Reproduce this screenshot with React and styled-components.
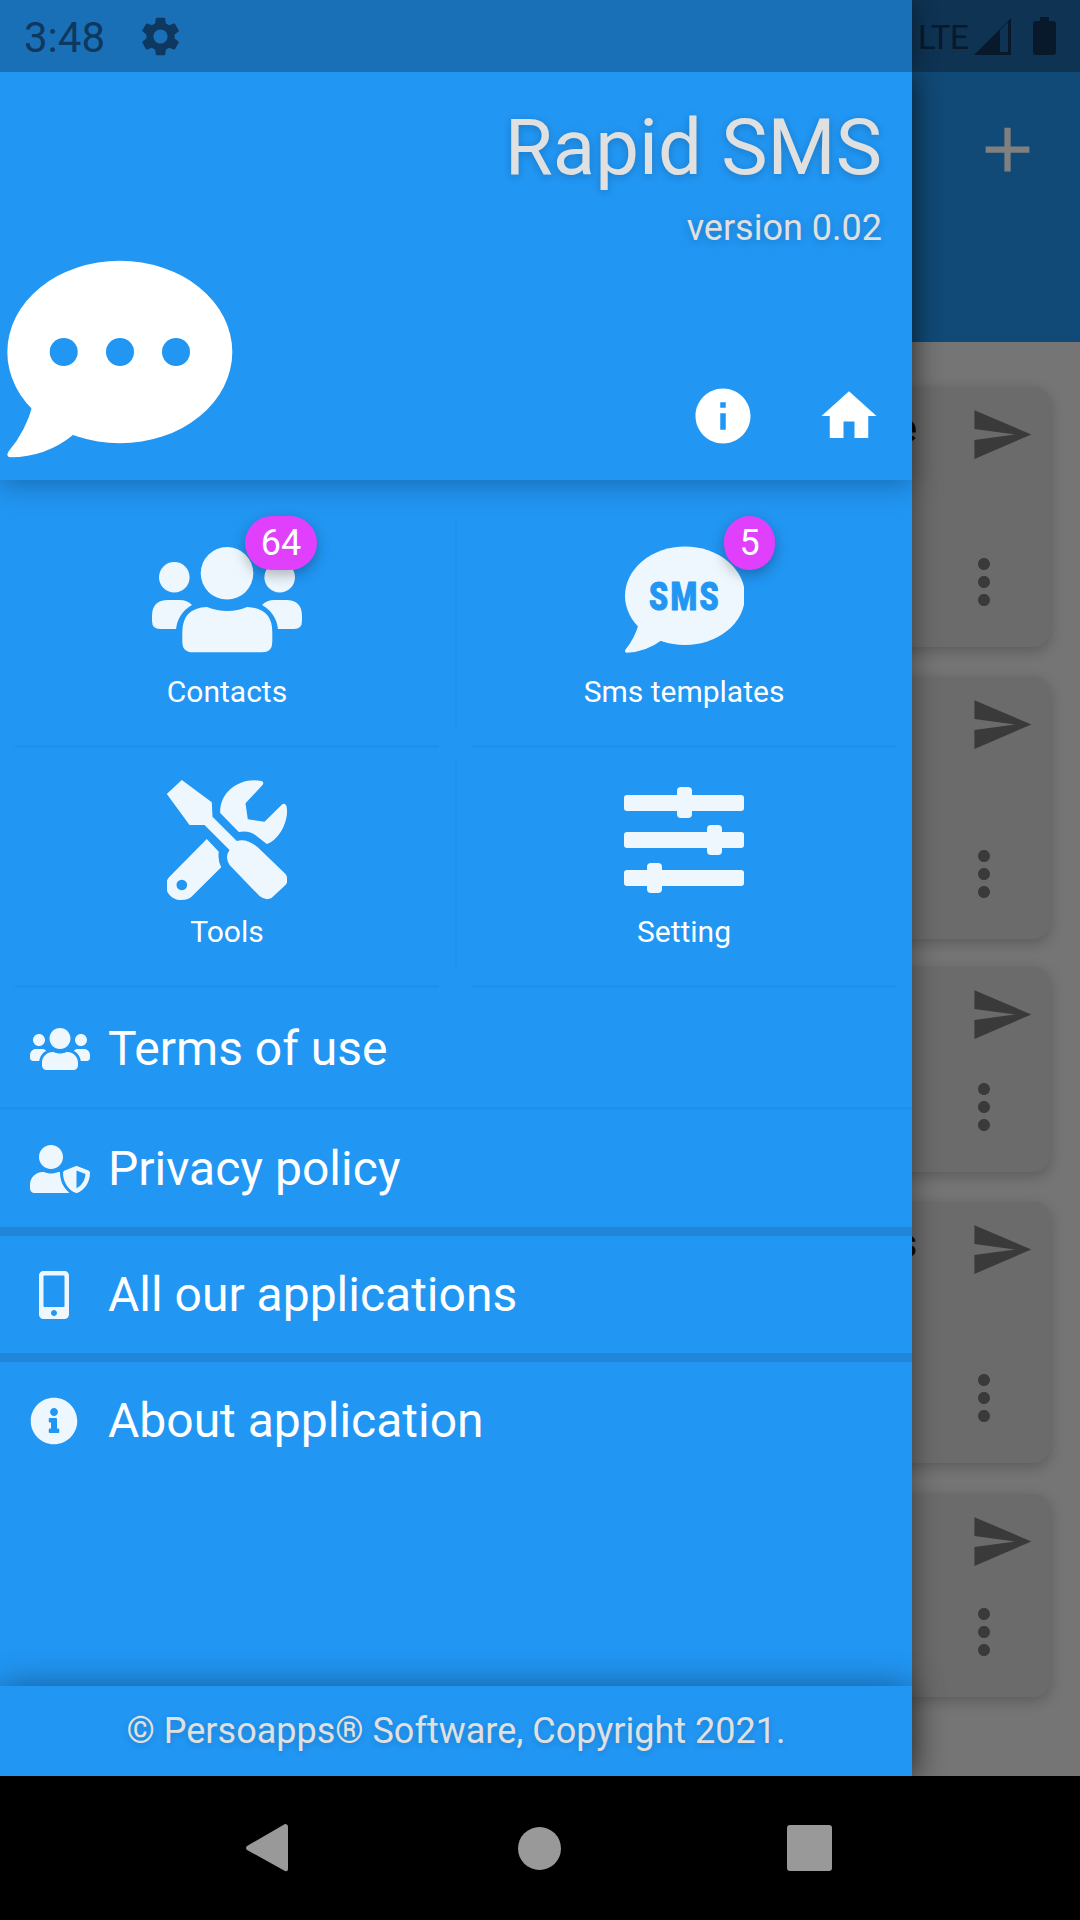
import React from 'react';
import styled, { createGlobalStyle } from 'styled-components';
import { MdSettings, MdSend, MdMoreVert, MdAdd, MdInfo, MdHome } from 'react-icons/md';
import { FaUsers, FaUserShield, FaMobileAlt, FaInfoCircle } from 'react-icons/fa';

const BLUE = '#2196f3';
const ICON = '#eef7fe';

const Global = createGlobalStyle`
  html, body { margin: 0; padding: 0; background: #000; }
  * { box-sizing: border-box; }
  body { font-family: Roboto, "Liberation Sans", sans-serif; }
`;

const Screen = styled.div`
  width: 1080px; height: 1920px; display: flex; flex-direction: column; overflow: hidden; background: #000;
`;
const StatusBar = styled.div`
  height: 72px; flex: none; display: flex; background: #0e3353;
`;
const StatusLeft = styled.div`
  width: 912px; display: flex; align-items: center; gap: 32px; padding-left: 24px;
  background: #1a70b6; color: #0f3860; font-size: 42px; box-shadow: 0 0 26px rgba(0,0,0,.45);
  clip-path: inset(0 -40px 0 0); position: relative; z-index: 1;
`;
const StatusTime = styled.span`
  padding-top: 3px;
`;
const StatusRight = styled.div`
  flex: 1; display: flex; align-items: center; padding-left: 6px; color: #07192a;
`;
const Lte = styled.span`
  font-size: 33px; width: 56px; letter-spacing: -0.5px; padding-top: 2px;
`;
const Battery = styled.svg`
  margin-left: 22px;
`;
const Main = styled.div`
  flex: 1; position: relative; overflow: hidden; display: flex; flex-direction: column; background: #757575;
`;
const AppBar = styled.div`
  height: 270px; flex: none; background: #114a77; display: flex; justify-content: flex-end; padding: 40px 35px 0 0; color: #808080;
`;
const CardList = styled.div`
  flex: 1; display: flex; flex-direction: column; padding: 45px 30px 0 20px;
`;
const Card = styled.div`
  height: ${p => p.$h}px; flex: none; margin-bottom: ${p => p.$gap}px; background: #6b6b6b; border-radius: 16px;
  box-shadow: 0 4px 14px rgba(0,0,0,.22); display: grid; grid-template-columns: 1fr 133px;
`;
const CardTitle = styled.div`
  text-align: right; padding-top: 20px; font-size: 40px; font-weight: 500; color: #0c0c0c; line-height: 44px;
`;
const CardActions = styled.div`
  display: flex; flex-direction: column; justify-content: space-between; align-items: flex-end; color: #3a3a3a; padding: 15px 0 29px;
`;
const SendSlot = styled.div`
  height: 65px; margin-right: 16px;
`;
const MoreSlot = styled.div`
  height: 72px; margin-right: 30px;
`;
const Drawer = styled.div`
  position: absolute; top: 0; left: 0; bottom: 0; width: 912px; background: ${BLUE};
  display: flex; flex-direction: column; box-shadow: 0 0 26px rgba(0,0,0,.45);
`;
const Header = styled.div`
  height: 408px; flex: none; display: flex; flex-direction: column; justify-content: space-between;
  box-shadow: 0 5px 26px rgba(0,0,0,.28); position: relative; background: ${BLUE};
`;
const Titles = styled.div`
  display: flex; flex-direction: column; align-items: flex-end; padding: 28px 30px 0 0;
  color: #e0e0e0; text-shadow: 0 2px 8px rgba(0,0,0,.2);
`;
const AppName = styled.div`
  font-size: 78px; line-height: 96px;
`;
const Version = styled.div`
  font-size: 36px; line-height: 42px; margin-top: 11px;
`;
const HeaderBottom = styled.div`
  display: flex; justify-content: space-between; align-items: flex-end; padding: 0 30px 11px 0; color: #fff;
`;
const HeaderActions = styled.div`
  display: flex; gap: 60px; margin-bottom: 20px;
  svg { display: block; }
`;
const Grid = styled.div`
  flex: none; display: grid; grid-template-columns: 424px 33px 424px; padding: 28px 0 0 15px;
`;
const Cell = styled.div`
  height: 240px; border-bottom: 3px solid #2090ea; display: flex; flex-direction: column; align-items: center; padding-top: 32px;
  color: #fff;
`;
const VDivider = styled.div`
  justify-self: center; width: 2px; margin: 12px 0 18px; background: #2090ea;
`;
const IconBox = styled.div`
  width: 120px; height: 120px; position: relative; display: flex; justify-content: center; color: ${ICON}; flex: none;
  svg { display: block; flex: none; }
`;
const Badge = styled.div`
  position: absolute; top: -24px; left: ${p => p.$left}px; width: ${p => p.$w}px; height: 54px; border-radius: 27px;
  background: #e040fb; color: #fff; font-size: 36px; display: flex; align-items: center; justify-content: center;
  box-shadow: 0 5px 14px rgba(0,0,0,.28);
`;
const CellLabel = styled.div`
  font-size: 30px; line-height: 34px; margin-top: 15px; white-space: nowrap;
`;
const List = styled.div`
  flex: 1; display: flex; flex-direction: column; min-height: 0; padding-top: 2px;
`;
const Row = styled.div`
  height: 117px; flex: none; display: grid; grid-template-columns: 78px 1fr; align-items: center; padding-left: 30px;
  color: #fff; font-size: 48px;
`;
const RowIcon = styled.div`
  width: ${p => p.$w}px; display: flex; justify-content: center; color: ${ICON};
  svg { display: block; flex: none; }
`;
const Sep = styled.div`
  height: ${p => p.$h}px; flex: none; background: ${p => (p.$h > 4 ? '#2286d8' : '#2090ea')};
`;
const Footer = styled.div`
  height: 90px; flex: none; background: ${BLUE}; display: flex; align-items: center; justify-content: center;
  color: #e0e0e0; font-size: 36px; text-shadow: 0 2px 6px rgba(0,0,0,.15);
  box-shadow: 0 0 34px rgba(0,0,0,.4); position: relative;
`;
const NavBar = styled.div`
  height: 144px; flex: none; background: #000; display: flex; align-items: center; justify-content: space-between; padding: 0 248px 0 246px;
`;
const NavCircle = styled.div`
  width: 43px; height: 43px; border-radius: 50%; background: #999; margin-left: 4px;
`;
const NavSquare = styled.div`
  width: 45px; height: 46px; border-radius: 3px; background: #999;
`;

const ContactsIcon = () => (
  <svg width="150" height="120" viewBox="0 0 150 120" fill={ICON}>
    <circle cx="75" cy="33.3" r="26.3" />
    <circle cx="22.3" cy="37.3" r="15.3" />
    <circle cx="127.7" cy="37.3" r="15.3" />
    <path d="M55 67Q65 71 75.3 71Q86 71 95 67Q120.3 68 120.3 92V102Q120.3 112.3 110 112.3H41Q30.3 112.3 30.3 102V92Q30.3 68 55 67Z" />
    <path d="M16 60H28Q35 60 40 65Q26 73 24 89H8Q0 89 0 81V76Q0 60 16 60Z" />
    <path d="M134 60H122Q115 60 110 65Q124 73 126 89H142Q150 89 150 81V76Q150 60 134 60Z" />
  </svg>
);

const SmsIcon = () => (
  <svg width="120" height="120" viewBox="14 30 120 120">
    <ellipse cx="75" cy="85.8" rx="60" ry="49.2" fill={ICON} />
    <path d="M29 113Q25 128 15.5 139.5Q14 142.5 17 142.7Q36 142 52 130Z" fill={ICON} />
    <text x="75" y="100" textAnchor="middle" textLength="72" lengthAdjust="spacingAndGlyphs" letterSpacing="3"
      fontFamily="Roboto, sans-serif" fontWeight="900" fontSize="38" fill={BLUE}
      stroke={BLUE} strokeWidth="1" strokeLinejoin="round">SMS</text>
  </svg>
);

const ToolsIcon = () => (
  <svg width="120" height="120" viewBox="17.5 10 120 120" fill={ICON}>
    <path d="M32.3 10L62.3 32.3L63 46.7L87.3 71Q97 68 108 77L136 104Q140 110 136 115L122 128Q116 131 110 126L80 95Q75 87 80 80L55 55H40L17.3 24Z" />
    <path d="M112 11C90 7 70 22 70.7 43L89.3 62Q100 60 107 66L117.3 74C130 70 140 50 137 36Q135 32 132 35L115 51.7L98.3 49.3L96 33.3L113 15Q115 12 112 11Z" />
    <path fillRule="evenodd" d="M57.3 69L20 106.7C12 115 18 130 32 130Q38 130 42 126.7L71.7 97.3Q68 90 69.3 81.7ZM32.3 109.7a5.3 5.3 0 1 0 .01 0Z" />
  </svg>
);

const SlidersIcon = () => (
  <svg width="120" height="120" viewBox="0 0 120 120" fill={ICON}>
    <rect x="0" y="15" width="120" height="16" rx="3" />
    <rect x="53" y="7" width="15" height="31" rx="4" />
    <rect x="0" y="52" width="120" height="16" rx="3" />
    <rect x="83" y="45" width="15" height="30" rx="4" />
    <rect x="0" y="90" width="120" height="16" rx="3" />
    <rect x="23" y="83" width="15" height="30" rx="4" />
  </svg>
);

const BigBubble = () => (
  <svg width="240" height="220" viewBox="0 0 240 220">
    <ellipse cx="119.8" cy="103" rx="112.5" ry="91.3" fill="#fff" />
    <path d="M33 155Q26 182 8.5 202.5Q5.5 207.5 10.5 208.3Q46 208 73 186Z" fill="#fff" />
    <circle cx="63.7" cy="103" r="14" fill={BLUE} />
    <circle cx="120" cy="103" r="14" fill={BLUE} />
    <circle cx="176" cy="103" r="14" fill={BLUE} />
  </svg>
);

const cards = [
  { h: 260, gap: 30, t: 'e' },
  { h: 262, gap: 28, t: '' },
  { h: 205, gap: 30, t: '' },
  { h: 261, gap: 31, t: 's' },
  { h: 203, gap: 0, t: '' },
];

export default function App() {
  return (
    <Screen>
      <Global />
      <StatusBar>
        <StatusLeft>
          <StatusTime>3:48</StatusTime>
          <MdSettings size={47} />
        </StatusLeft>
        <StatusRight>
          <Lte>LTE</Lte>
          <svg width="37" height="37" viewBox="0 0 37 37">
            <path d="M0 37L37 0V37Z" fill="#07192a" />
            <path d="M26 12L34 4V34H26Z" fill="#0e3353" />
          </svg>
          <Battery width="23" height="38" viewBox="0 0 23 38">
            <path d="M7 0H16V4H20Q23 4 23 7V35Q23 38 20 38H3Q0 38 0 35V7Q0 4 3 4H7Z" fill="#07192a" />
          </Battery>
        </StatusRight>
      </StatusBar>
      <Main>
        <AppBar><MdAdd size={75} /></AppBar>
        <CardList>
          {cards.map((c, i) => (
            <Card key={i} $h={c.h} $gap={c.gap}>
              <CardTitle>{c.t}</CardTitle>
              <CardActions>
                <SendSlot><MdSend size={65} /></SendSlot>
                <MoreSlot><MdMoreVert size={72} /></MoreSlot>
              </CardActions>
            </Card>
          ))}
        </CardList>
        <Drawer>
          <Header>
            <Titles>
              <AppName>Rapid SMS</AppName>
              <Version>version 0.02</Version>
            </Titles>
            <HeaderBottom>
              <BigBubble />
              <HeaderActions>
                <MdInfo size={66} />
                <MdHome size={66} />
              </HeaderActions>
            </HeaderBottom>
          </Header>
          <Grid>
            <Cell>
              <IconBox><ContactsIcon /><Badge $left={78} $w={72}>64</Badge></IconBox>
              <CellLabel>Contacts</CellLabel>
            </Cell>
            <VDivider />
            <Cell>
              <IconBox><SmsIcon /><Badge $left={100} $w={51}>5</Badge></IconBox>
              <CellLabel>Sms templates</CellLabel>
            </Cell>
            <Cell>
              <IconBox><ToolsIcon /></IconBox>
              <CellLabel>Tools</CellLabel>
            </Cell>
            <VDivider />
            <Cell>
              <IconBox><SlidersIcon /></IconBox>
              <CellLabel>Setting</CellLabel>
            </Cell>
          </Grid>
          <List>
            <Row><RowIcon $w={60}><FaUsers size={60} /></RowIcon>Terms of use</Row>
            <Sep $h={3} />
            <Row><RowIcon $w={60}><FaUserShield size={60} /></RowIcon>Privacy policy</Row>
            <Sep $h={9} />
            <Row><RowIcon $w={48}><FaMobileAlt size={48} /></RowIcon>All our applications</Row>
            <Sep $h={9} />
            <Row><RowIcon $w={48}><FaInfoCircle size={48} /></RowIcon>About application</Row>
          </List>
          <Footer>© Persoapps® Software, Copyright 2021.</Footer>
        </Drawer>
      </Main>
      <NavBar>
        <svg width="42" height="48" viewBox="0 0 42 48"><path d="M39 0Q42 0 42 3V45Q42 48 39 47L1 26Q-1 24 1 22Z" fill="#999" /></svg>
        <NavCircle />
        <NavSquare />
      </NavBar>
    </Screen>
  );
}
